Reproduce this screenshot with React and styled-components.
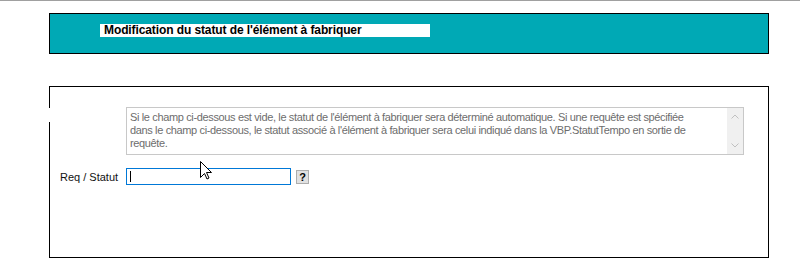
import React from 'react';
import styled, { createGlobalStyle } from 'styled-components';

const GlobalStyle = createGlobalStyle`
  body {
    margin: 0;
    background: #fff;
    font-family: "Liberation Sans", Arial, sans-serif;
  }
`;

const Page = styled.div`
  height: 278px;
  border-top: 1px solid #a0a0a0;
  padding: 12px 0 0 49px;
`;

const Banner = styled.div`
  box-sizing: border-box;
  width: 720px;
  height: 41px;
  border: 1px solid #000;
  background: #00a9b5;
  padding: 10px 0 0 50px;
`;

const Title = styled.h1`
  margin: 0;
  box-sizing: border-box;
  width: 330px;
  height: 13px;
  background: #fff;
  padding-left: 4px;
  font-size: 12px;
  line-height: 13px;
  font-weight: bold;
  letter-spacing: -0.1px;
  color: #000;
  white-space: nowrap;
`;

const Panel = styled.div`
  position: relative;
  box-sizing: border-box;
  width: 720px;
  height: 172px;
  margin-top: 32px;
  border: 1px solid #000;
  padding: 20px 0 0 10px;

  &::before {
    content: '';
    position: absolute;
    left: -1px;
    top: 21px;
    width: 1px;
    height: 14px;
    background: #fff;
  }
`;

const Notice = styled.div`
  box-sizing: border-box;
  display: flex;
  width: 618px;
  height: 48px;
  margin-left: 66px;
  border: 1px solid #c8c8c8;
  background: #fff;
`;

const NoticeText = styled.p`
  flex: 1;
  margin: 0;
  padding: 3px 0 0 3px;
  font-size: 11px;
  line-height: 13px;
  letter-spacing: -0.36px;
  color: #6d6d6d;
  white-space: nowrap;
`;

const ScrollBar = styled.div`
  width: 16px;
  background: #f0f0f0;
  display: flex;
  flex-direction: column;
  justify-content: space-between;
  align-items: center;
  padding: 6px 0;
`;

const Row = styled.div`
  display: flex;
  align-items: center;
  margin-top: 13px;
`;

const Label = styled.label`
  width: 66px;
  font-size: 11px;
  font-weight: normal;
  color: #111;
  white-space: nowrap;
`;

const Field = styled.div`
  box-sizing: border-box;
  width: 165px;
  height: 17px;
  border: 1px solid #0078d7;
  padding: 2px 0 0 3px;
`;

const Caret = styled.span`
  display: block;
  width: 1px;
  height: 11px;
  background: #000;
`;

const HelpButton = styled.button`
  box-sizing: border-box;
  width: 13px;
  height: 14px;
  margin-left: 5px;
  padding: 0;
  border: 1px solid #adadad;
  background: #e1e1e1;
  font-family: "Liberation Sans", Arial, sans-serif;
  font-size: 11px;
  font-weight: bold;
  line-height: 12px;
  color: #000;
`;

const Pointer = styled.svg`
  position: absolute;
  left: 150px;
  top: 74px;
`;

const Chevron = ({ up }) => (
  <svg width="8" height="5" viewBox="0 0 8 5">
    <path
      d={up ? 'M0.5 4.5 L4 1 L7.5 4.5' : 'M0.5 0.5 L4 4 L7.5 0.5'}
      fill="none"
      stroke="#c0c0c0"
      strokeWidth="1"
    />
  </svg>
);

const App = () => (
  <>
    <GlobalStyle />
    <Page>
      <Banner>
        <Title>Modification du statut de l'élément à fabriquer</Title>
      </Banner>
      <Panel>
        <Notice>
          <NoticeText>
            Si le champ ci-dessous est vide, le statut de l'élément à fabriquer sera déterminé automatique. Si une requête est spécifiée
            <br />
            dans le champ ci-dessous, le statut associé à l'élément à fabriquer sera celui indiqué dans la VBP.StatutTempo en sortie de
            <br />
            requête.
          </NoticeText>
          <ScrollBar>
            <Chevron up />
            <Chevron />
          </ScrollBar>
        </Notice>
        <Row>
          <Label>Req / Statut</Label>
          <Field>
            <Caret />
          </Field>
          <HelpButton type="button">?</HelpButton>
        </Row>
        <Pointer width="12" height="19" viewBox="0 0 12 19">
          <path
            d="M0.5 0.5 L0.5 16.5 L4.5 12.5 L7 18 L9 17 L6.5 11.5 L11.5 11.5 Z"
            fill="#fff"
            stroke="#000"
            strokeWidth="1"
            strokeLinejoin="miter"
          />
        </Pointer>
      </Panel>
    </Page>
  </>
);

export default App;
